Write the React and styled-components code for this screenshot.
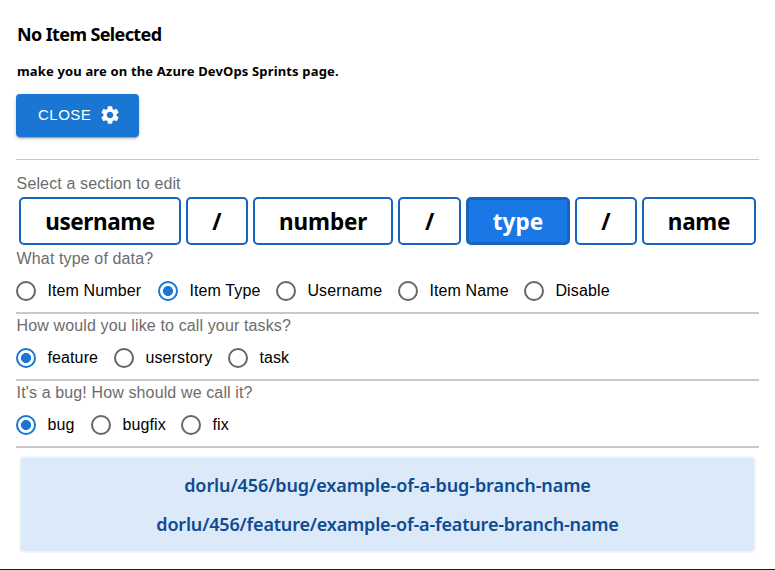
import React, { useState } from "react";
import styled, { createGlobalStyle, css } from "styled-components";

const GlobalStyle = createGlobalStyle`
  * { box-sizing: border-box; }
  body { margin: 0; background: #fff; color: #000; overflow: hidden; }
`;

const heading = css`
  font-family: "Noto Sans", "Segoe UI", sans-serif;
  font-weight: 700;
  white-space: nowrap;
`;

const Page = styled.main`
  display: flex;
  flex-direction: column;
  height: 570px;
  padding: 0 16px;
  border-bottom: 1px solid #1b1b1f;
  font: 16px/23px "Liberation Sans", Arial, sans-serif;
  letter-spacing: 0.13px;
`;

const Title = styled.h3`
  ${heading}
  margin: 22px 0 0 1px;
  font-size: 18px;
  line-height: 25px;
  letter-spacing: -0.62px;
`;

const Hint = styled.h5`
  ${heading}
  margin: 15px 0 0 1px;
  font-size: 13px;
  line-height: 18px;
  letter-spacing: 0.15px;
`;

const CloseButton = styled.button`
  display: flex;
  align-items: center;
  align-self: flex-start;
  width: 123px;
  height: 43px;
  margin-top: 14px;
  padding: 0 18px 1px 22px;
  border: 0;
  border-radius: 4px;
  background: #1976d2;
  color: #fff;
  font: 15px/26px "Liberation Sans", Arial, sans-serif;
  letter-spacing: 0.5px;
  box-shadow: 0 3px 1px -2px rgba(0, 0, 0, 0.2), 0 2px 2px rgba(0, 0, 0, 0.14),
    0 1px 5px rgba(0, 0, 0, 0.12);
`;

const Gear = styled.svg`
  width: 22px;
  height: 22px;
  margin-left: auto;
  fill: currentColor;
`;

const Divider = styled.hr`
  width: 100%;
  height: 1px;
  margin: 22px 0 12px;
  border: 0;
  background: #c8c8c8;
`;

const Label = styled.div`
  height: 23px;
  padding-left: 0.6px;
  color: #6c6c6c;
`;

const Sections = styled.div`
  display: flex;
  gap: 5px;
  height: 48px;
  margin: 2px 0 2px 3px;
`;

const Section = styled.button`
  ${heading}
  flex: 0 0 ${(p) => p.$width}px;
  padding: ${(p) => (p.$active ? "2px 0 0" : "1px 0 0")};
  border: ${(p) => (p.$active ? 3 : 2)}px solid #1565c0;
  border-radius: 5px;
  background: ${(p) => (p.$active ? "#1a78e6" : "#fff")};
  color: ${(p) => (p.$active ? "#fff" : "#000")};
  font-size: 22.5px;
  line-height: 32px;
  letter-spacing: ${(p) => p.$spacing}px;
`;

const Options = styled.div`
  display: flex;
  height: 44px;
  border-bottom: 2px solid #c8c8c8;
`;

const Option = styled.label`
  display: flex;
  align-items: center;
  width: ${(p) => p.$width}px;
  white-space: nowrap;
`;

const OptionText = styled.span`
  padding-bottom: 2px;
`;

const Radio = styled.input`
  appearance: none;
  flex: none;
  width: 20px;
  height: 20px;
  margin: 0 11.4px 0 0;
  border: 2px solid #666;
  border-radius: 50%;
  &:checked {
    border-color: #1976d2;
    background: radial-gradient(circle, #1976d2 4.7px, transparent 5.3px);
  }
`;

const Preview = styled.section`
  display: flex;
  flex-direction: column;
  align-items: center;
  height: 97px;
  margin: 8px 3px 0;
  padding-top: 14px;
  border: 2px solid #ebf4ff;
  border-radius: 5px;
  background: #dce9f9;
`;

const Branch = styled.div`
  ${heading}
  height: 39px;
  color: #0d4b92;
  font-size: 18px;
  font-weight: 600;
  line-height: 26px;
  letter-spacing: ${(p) => p.$spacing}px;
`;

const sections = [
  ["username", 162, -0.4], ["/", 62, 0], ["number", 140.4, -0.1], ["/", 62.6, 0],
  ["type", 104, 0.1], ["/", 62, 0], ["name", 114, -0.3],
];

const questions = [
  { label: "What type of data?", initial: "Item Type",
    options: [["Item Number", 142], ["Item Type", 118], ["Username", 122], ["Item Name", 126], ["Disable", 100]] },
  { label: "How would you like to call your tasks?", initial: "feature",
    options: [["feature", 98], ["userstory", 114], ["task", 80]] },
  { label: "It's a bug! How should we call it?", initial: "bug",
    options: [["bug", 75], ["bugfix", 90], ["fix", 70]] },
];

function Question({ label, initial, options }) {
  const [value, setValue] = useState(initial);
  return (
    <>
      <Label>{label}</Label>
      <Options>
        {options.map(([name, width]) => (
          <Option key={name} $width={width}>
            <Radio type="radio" name={label} checked={value === name} onChange={() => setValue(name)} />
            <OptionText>{name}</OptionText>
          </Option>
        ))}
      </Options>
    </>
  );
}

export default function App() {
  const [active, setActive] = useState(4);
  return (
    <Page>
      <GlobalStyle />
      <Title>No Item Selected</Title>
      <Hint>make you are on the Azure DevOps Sprints page.</Hint>
      <CloseButton>
        CLOSE
        <Gear viewBox="0 0 24 24">
          <path d="M19.14 12.94c.04-.3.06-.61.06-.94 0-.32-.02-.64-.07-.94l2.03-1.58c.18-.14.23-.41.12-.61l-1.92-3.32c-.12-.22-.37-.29-.59-.22l-2.39.96c-.5-.38-1.03-.7-1.62-.94l-.36-2.54c-.04-.24-.24-.41-.48-.41h-3.84c-.24 0-.43.17-.47.41l-.36 2.54c-.59.24-1.13.57-1.62.94l-2.39-.96c-.22-.08-.47 0-.59.22L2.74 8.87c-.12.21-.08.47.12.61l2.03 1.58c-.05.3-.09.63-.09.94s.02.64.07.94l-2.03 1.58c-.18.14-.23.41-.12.61l1.92 3.32c.12.22.37.29.59.22l2.39-.96c.5.38 1.03.7 1.62.94l.36 2.54c.05.24.24.41.48.41h3.84c.24 0 .44-.17.47-.41l.36-2.54c.59-.24 1.13-.56 1.62-.94l2.39.96c.22.08.47 0 .59-.22l1.92-3.32c.12-.22.07-.47-.12-.61l-2.01-1.58zM12 15.6c-1.98 0-3.6-1.62-3.6-3.6s1.62-3.6 3.6-3.6 3.6 1.62 3.6 3.6-1.62 3.6-3.6 3.6z" />
        </Gear>
      </CloseButton>
      <Divider />
      <Label>Select a section to edit</Label>
      <Sections>
        {sections.map(([name, width, spacing], i) => (
          <Section
            key={i}
            $width={width}
            $spacing={spacing}
            $active={active === i}
            onClick={() => setActive(i)}
          >
            {name}
          </Section>
        ))}
      </Sections>
      {questions.map((q) => <Question key={q.label} {...q} />)}
      <Preview>
        <Branch $spacing={-0.09}>dorlu/456/bug/example-of-a-bug-branch-name</Branch>
        <Branch $spacing={-0.18}>dorlu/456/feature/example-of-a-feature-branch-name</Branch>
      </Preview>
    </Page>
  );
}
